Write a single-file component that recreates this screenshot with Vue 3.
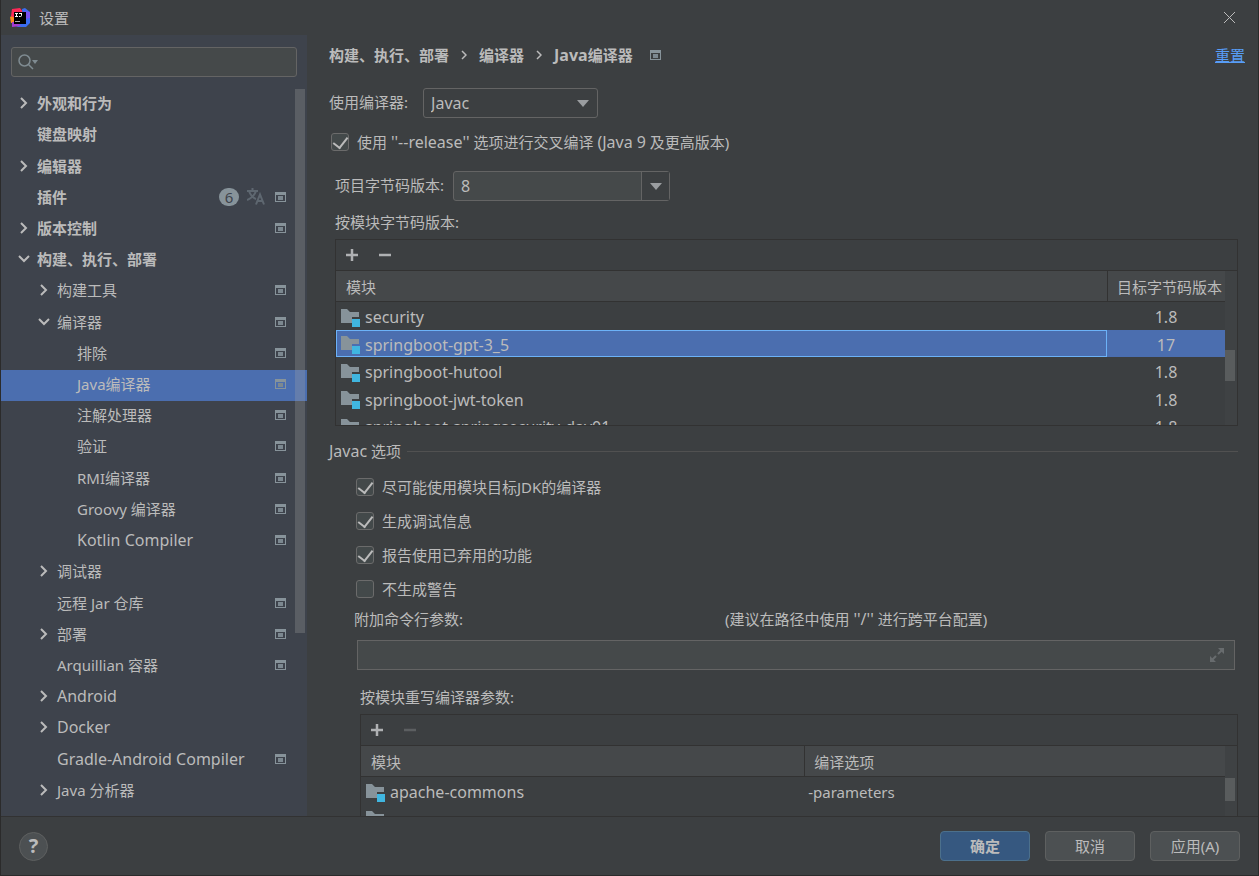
<script setup>
import { ref } from 'vue'

const tree = [
  { name: '外观和行为', level: 0, arrow: 'right' },
  { name: '键盘映射', level: 0 },
  { name: '编辑器', level: 0, arrow: 'right' },
  { name: '插件', level: 0, badge: 6, lang: true, project: true },
  { name: '版本控制', level: 0, arrow: 'right', project: true },
  { name: '构建、执行、部署', level: 0, arrow: 'down' },
  { name: '构建工具', level: 1, arrow: 'right', project: true },
  { name: '编译器', level: 1, arrow: 'down', project: true },
  { name: '排除', level: 2, project: true },
  { name: 'Java编译器', level: 2, project: true, selected: true },
  { name: '注解处理器', level: 2, project: true },
  { name: '验证', level: 2, project: true },
  { name: 'RMI编译器', level: 2, project: true },
  { name: 'Groovy 编译器', level: 2, project: true },
  { name: 'Kotlin Compiler', level: 2, project: true, latin: true },
  { name: '调试器', level: 1, arrow: 'right' },
  { name: '远程 Jar 仓库', level: 1, project: true },
  { name: '部署', level: 1, arrow: 'right', project: true },
  { name: 'Arquillian 容器', level: 1, project: true },
  { name: 'Android', level: 1, arrow: 'right', latin: true },
  { name: 'Docker', level: 1, arrow: 'right', latin: true },
  { name: 'Gradle-Android Compiler', level: 1, project: true, latin: true },
  { name: 'Java 分析器', level: 1, arrow: 'right' },
]

const modules = [
  { name: 'security', target: '1.8' },
  { name: 'springboot-gpt-3_5', target: '17', selected: true },
  { name: 'springboot-hutool', target: '1.8' },
  { name: 'springboot-jwt-token', target: '1.8' },
  { name: 'springboot-springsecurity-day01', target: '1.8' },
]

const overrides = [
  { name: 'apache-commons', options: '-parameters' },
  { name: 'common', options: '-parameters' },
]

const options = ref([
  { label: '尽可能使用模块目标JDK的编译器', on: true },
  { label: '生成调试信息', on: true },
  { label: '报告使用已弃用的功能', on: true },
  { label: '不生成警告', on: false },
])

const query = ref('')
const compiler = ref('Javac')
const useRelease = ref(true)
const bytecode = ref('8')
const extraArgs = ref('')
</script>

<template>
  <div class="window">
    <svg class="symbols" aria-hidden="true">
      <symbol id="project" viewBox="0 0 11 10">
        <path fill="#87939a" fill-rule="evenodd" d="M0 0h11v10H0zM1 3v6h9V3z" />
        <path fill="#7c8890" d="M3 4h5v4H3z" />
      </symbol>
      <symbol id="folder" viewBox="0 0 20 19">
        <path fill="#87939a" d="M1 1h6l3 3h9v5h-7v6H1z" />
        <path fill="#40b6e0" d="M12 11h8v8h-8z" />
      </symbol>
    </svg>

    <header class="titlebar">
      <svg class="logo" viewBox="0 0 20 20" aria-hidden="true">
        <path fill="#fc8a1d" d="M0 9l4-2v8H1z" />
        <path fill="#fe2857" d="M2 1l8-1 3 4-8 6-4-2z" />
        <path fill="#3a6df0" d="M12 1l3-1 5 4v11l-4 4H8l-4-2 9-4z" />
        <path fill="#7a4ff0" d="M14 3l6 1v6l-5 1z" />
        <path fill="#a63bd0" d="M2 14h5l4 4-9 1z" />
        <path fill="#000" d="M4 4h12v12H4z" />
        <path fill="none" stroke="#fff" d="M5 5.500h3M6.500 5v4M5 8.500h3M9 5.500h3M11.500 5v2.500q0 1-1 1H9" />
        <path fill="#aaa" d="M5 13h5v1H5z" />
      </svg>
      <h1>设置</h1>
      <button class="close" aria-label="关闭">
        <svg viewBox="0 0 13 13"><path d="M1 1l11 11M12 1L1 12" /></svg>
      </button>
    </header>

    <div class="body">
      <aside class="sidebar">
        <div class="search">
          <svg viewBox="0 0 20 16" aria-hidden="true">
            <circle cx="6.500" cy="6.500" r="5.500" />
            <path d="M10.500 10.500L15 15" />
            <path class="solid" d="M14 6h6l-3 4z" />
          </svg>
          <input v-model="query" type="search" aria-label="搜索设置" />
        </div>
        <nav class="tree">
          <a
            v-for="item in tree"
            :key="item.name"
            href="#"
            :class="['node', 'level-' + item.level, { selected: item.selected }]"
          >
            <span class="arrow">
              <svg v-if="item.arrow" :class="item.arrow" viewBox="0 0 12 12"><path d="M3 1l5 5-5 5" /></svg>
            </span>
            <span :class="['name', { latin: item.latin }]">{{ item.name }}</span>
            <span v-if="item.badge" class="badge">{{ item.badge }}</span>
            <svg v-if="item.lang" class="lang" viewBox="0 0 18 17" aria-hidden="true">
              <path d="M0 3h11M5.500 0v3M2 3q2 6 7 8M9 3Q7 9 0 12M9 16.500l4-10 4 10M10.500 13h5" />
            </svg>
            <svg v-if="item.project" class="project"><use href="#project" /></svg>
          </a>
          <span class="thumb"></span>
        </nav>
      </aside>

      <main class="main">
        <div class="crumbs">
          <b>构建、执行、部署</b>
          <svg class="sep" viewBox="0 0 6 10"><path d="M1 1l4 4-4 4" /></svg>
          <b>编译器</b>
          <svg class="sep" viewBox="0 0 6 10"><path d="M1 1l4 4-4 4" /></svg>
          <b><span class="latin">Java</span>编译器</b>
          <svg class="project"><use href="#project" /></svg>
          <a class="reset" href="#">重置</a>
        </div>

        <div class="line compiler">
          <label for="compiler">使用编译器:</label>
          <span class="combo">
            <select id="compiler" v-model="compiler" class="latin"><option>Javac</option></select>
            <svg viewBox="0 0 12 7"><path d="M0 0h12L6 7z" /></svg>
          </span>
        </div>

        <label class="check release">
          <input v-model="useRelease" type="checkbox" />
          <span>使用 <span class="latin">''--release''</span> 选项进行交叉编译 <span class="latin">(Java 9</span> 及更高版本)</span>
        </label>

        <div class="line bytecode">
          <label for="bytecode">项目字节码版本:</label>
          <span class="combo editable">
            <input id="bytecode" v-model="bytecode" class="latin" type="text" />
            <button aria-label="选择版本"><svg viewBox="0 0 12 7"><path d="M0 0h12L6 7z" /></svg></button>
          </span>
        </div>

        <p class="caption">按模块字节码版本:</p>
        <section class="panel modules">
          <div class="toolbar">
            <button aria-label="添加"><svg viewBox="0 0 14 14"><path d="M7 1v12M1 7h12" /></svg></button>
            <button aria-label="移除"><svg viewBox="0 0 14 14"><path d="M1 7h12" /></svg></button>
          </div>
          <div class="scroller">
            <table>
              <thead>
                <tr><th>模块</th><th class="target">目标字节码版本</th></tr>
              </thead>
              <tbody>
                <tr v-for="m in modules" :key="m.name" :class="{ selected: m.selected }">
                  <td><span class="module latin"><svg><use href="#folder" /></svg>{{ m.name }}</span></td>
                  <td class="target latin">{{ m.target }}</td>
                </tr>
              </tbody>
            </table>
            <div class="track"><span></span></div>
          </div>
        </section>

        <h2 class="group"><span><span class="latin">Javac</span> 选项</span></h2>
        <div class="options">
          <label v-for="o in options" :key="o.label" class="check">
            <input v-model="o.on" type="checkbox" />
            <span>{{ o.label }}</span>
          </label>
        </div>

        <div class="args-head">
          <label for="args">附加命令行参数:</label>
          <span>(建议在路径中使用 <span class="latin">''/''</span> 进行跨平台配置)</span>
        </div>
        <div class="args">
          <input id="args" v-model="extraArgs" type="text" />
          <button aria-label="展开">
            <svg viewBox="0 0 16 16">
              <path d="M9 1h6v6zM1 9l6 6H1z" />
              <path class="stroke" d="M9 7l4-4M7 9l-4 4" />
            </svg>
          </button>
        </div>

        <p class="caption override">按模块重写编译器参数:</p>
        <section class="panel overrides">
          <div class="toolbar">
            <button aria-label="添加"><svg viewBox="0 0 14 14"><path d="M7 1v12M1 7h12" /></svg></button>
            <button aria-label="移除" disabled><svg viewBox="0 0 14 14"><path d="M1 7h12" /></svg></button>
          </div>
          <div class="scroller">
            <table>
              <thead>
                <tr><th class="wide">模块</th><th>编译选项</th></tr>
              </thead>
              <tbody>
                <tr v-for="m in overrides" :key="m.name">
                  <td><span class="module latin"><svg><use href="#folder" /></svg>{{ m.name }}</span></td>
                  <td>{{ m.options }}</td>
                </tr>
              </tbody>
            </table>
            <div class="track"><span></span></div>
          </div>
        </section>
      </main>
    </div>

    <footer class="footer">
      <button class="help" aria-label="帮助">?</button>
      <button class="btn primary">确定</button>
      <button class="btn">取消</button>
      <button class="btn">应用(A)</button>
    </footer>
  </div>
</template>

<style>
body {
  background: #3c3f41;
}
</style>

<style scoped>
* {
  box-sizing: border-box;
}
.window {
  display: flex;
  flex-direction: column;
  height: 100vh;
  overflow: hidden;
  border: solid #2b2b2b;
  border-width: 0 1px 1px;
  background: #3c3f41;
  color: #bbb;
  font: 15px/20px "Noto Sans", "Noto Sans CJK SC", sans-serif;
}
svg {
  display: block;
  flex: none;
  fill: none;
}
.symbols {
  position: absolute;
  width: 0;
  height: 0;
}
button,
input,
select {
  padding: 0;
  border: 0;
  outline: 0;
  background: none;
  color: inherit;
  font: inherit;
}
a {
  color: inherit;
  text-decoration: none;
}
p,
h1,
h2 {
  margin: 0;
  font-size: 15px;
  font-weight: 400;
}
.latin {
  font-size: 16px;
}

.titlebar {
  display: flex;
  flex: none;
  align-items: center;
  height: 35px;
  padding: 0 22px 0 9px;
}
.logo {
  width: 20px;
  height: 20px;
  margin-right: 9px;
}
.close {
  margin-left: auto;
}
.close svg {
  width: 13px;
  height: 13px;
  stroke: #bbb;
}

.body {
  display: flex;
  flex: 1;
  min-height: 0;
}
.sidebar {
  display: flex;
  flex: none;
  flex-direction: column;
  width: 306px;
  padding: 12px 0 9px;
  background: #3e434c;
}
.search {
  display: flex;
  flex: none;
  align-items: center;
  height: 30px;
  margin: 0 10px 12px;
  padding: 0 6px;
  border: 1px solid #646464;
  border-radius: 3px;
  background: #45494a;
}
.search svg {
  width: 20px;
  height: 16px;
  stroke: #7f8b91;
  stroke-width: 1.5;
}
.search .solid {
  fill: #7f8b91;
  stroke: none;
}
.search input {
  flex: 1;
  min-width: 0;
}
.tree {
  position: relative;
  display: grid;
  flex: 1;
  grid-auto-rows: 1fr;
}
.node {
  display: flex;
  align-items: center;
  padding: 0 21px 3px 17px;
}
.node.level-0 {
  font-weight: 700;
}
.node.level-1 {
  padding-left: 37px;
}
.node.level-2 {
  padding-left: 57px;
}
.node.selected {
  background: #4b6eaf;
}
.arrow {
  width: 19px;
}
.arrow svg {
  width: 12px;
  height: 12px;
  stroke: #bbb;
  stroke-width: 2;
}
.arrow .down {
  transform: rotate(90deg);
}
.name {
  flex: 1;
}
.project {
  width: 11px;
  height: 10px;
}
.badge {
  width: 20px;
  height: 18px;
  border-radius: 9px;
  background: #87939a;
  color: #3e434c;
  font-weight: 400;
  line-height: 19px;
  text-align: center;
}
.lang {
  width: 18px;
  height: 17px;
  margin: 0 10px 0 8px;
  stroke: #5e6770;
  stroke-width: 2;
}
.thumb {
  position: absolute;
  top: 0;
  right: 2px;
  width: 10px;
  height: 544px;
  background: rgba(166, 166, 166, 0.28);
}

.main {
  display: flex;
  flex: 1;
  flex-direction: column;
  min-width: 0;
  padding: 10px 20px 0 22px;
  overflow: hidden;
}
.main > * {
  flex: none;
}
.crumbs {
  display: flex;
  align-items: center;
  height: 20px;
  margin-right: -7px;
}
.sep {
  width: 6px;
  height: 10px;
  margin: 0 12px;
  stroke: #bbb;
  stroke-width: 1.5;
}
.crumbs .project {
  margin-left: 17px;
}
.reset {
  margin-left: auto;
  color: #589df6;
  text-decoration: underline;
}
.line {
  display: flex;
  align-items: center;
  height: 30px;
}
.line label {
  padding-bottom: 2px;
}
.compiler {
  gap: 15px;
  margin-top: 23px;
}
.combo {
  display: flex;
  align-items: center;
  width: 175px;
  height: 30px;
  padding: 0 8px 0 7px;
  border: 1px solid #646464;
  border-radius: 3px;
}
.combo select {
  flex: 1;
  margin-right: -12px;
  padding-right: 12px;
  appearance: none;
}
.combo option {
  background: #3c3f41;
}
.combo svg {
  width: 12px;
  height: 7px;
  fill: #9a9da0;
  pointer-events: none;
}
.check {
  display: flex;
  align-items: center;
  gap: 8px;
  height: 20px;
}
.check input {
  display: grid;
  flex: none;
  width: 18px;
  height: 18px;
  margin: 0;
  border: 1px solid #6b6b6b;
  border-radius: 3px;
  appearance: none;
  background: #43494a;
  place-items: center;
}
.check input:checked::before {
  width: 7px;
  height: 12px;
  margin: 0 0 4px;
  border: solid #bbb;
  border-width: 0 2px 2px 0;
  content: "";
  transform: rotate(38deg);
}
.release {
  margin: 14px 0 0 2px;
}
.bytecode {
  gap: 9px;
  margin: 19px 0 0 6px;
}
.editable {
  width: 217px;
  padding: 0;
  background: #45494a;
}
.editable input {
  flex: 1;
  min-width: 0;
  padding: 0 7px;
}
.editable button {
  display: grid;
  width: 28px;
  height: 28px;
  border-left: 1px solid #646464;
  background: #3c3f41;
  place-items: center;
}
.caption {
  margin: 11px 0 0 6px;
}
.panel {
  display: flex;
  flex-direction: column;
  margin: 7px 0 0 6px;
  border: 1px solid #323232;
}
.panel.modules {
  height: 187px;
}
.toolbar {
  display: flex;
  flex: none;
  gap: 19px;
  align-items: center;
  height: 31px;
  padding-left: 9px;
  border-bottom: 1px solid #323232;
}
.toolbar svg {
  width: 14px;
  height: 14px;
  stroke: #afb1b3;
  stroke-width: 2.5;
}
.toolbar button:disabled svg {
  stroke: #5c5f61;
}
.scroller {
  display: flex;
  flex: 1;
  min-height: 0;
  overflow: hidden;
}
table {
  flex: 1;
  align-self: flex-start;
  width: 100%;
  border-collapse: separate;
  border-spacing: 0;
  table-layout: fixed;
}
th {
  height: 31px;
  padding: 1px 0 0 10px;
  border-bottom: 1px solid #323232;
  background: #45484a;
  font-weight: 400;
  text-align: left;
}
th + th {
  padding-left: 9px;
  border-left: 1px solid #323232;
}
.target {
  width: 118px;
  white-space: nowrap;
}
td {
  height: 27px;
  padding: 2px 4px 0;
}
td.target {
  padding-right: 0;
  padding-left: 0;
  text-align: center;
}
.wide {
  width: 51.3%;
}
tr:nth-child(odd) td {
  height: 28px;
}
.module {
  display: flex;
  align-items: center;
  gap: 5px;
}
.module svg {
  width: 20px;
  height: 19px;
}
tr.selected td {
  background: #4b6eaf;
}
tr.selected td:first-child {
  outline: 1px solid #6cb2f8;
  outline-offset: -1px;
}
.track {
  flex: none;
  width: 12px;
  background: #3f4244;
}
.track span {
  display: block;
  width: 10px;
  height: 31px;
  margin-top: 79px;
  background: #595c5d;
}
.group {
  display: flex;
  gap: 6px;
  align-items: center;
  height: 20px;
  margin-top: 15px;
}
.group::after {
  flex: 1;
  height: 1px;
  background: #515151;
  content: "";
}
.options {
  display: grid;
  gap: 14px;
  margin: 16px 0 0 27px;
}
.args-head {
  display: grid;
  grid-template-columns: 371px 1fr;
  height: 20px;
  margin: 10px 0 0 25px;
}
.args {
  display: flex;
  align-items: center;
  height: 30px;
  margin: 11px 3px 0 28px;
  padding: 0 9px;
  border: 1px solid #646464;
  background: #45494a;
}
.args input {
  flex: 1;
}
.args svg {
  width: 16px;
  height: 16px;
  fill: #686c6e;
}
.args .stroke {
  stroke: #686c6e;
  stroke-width: 2;
}
.override {
  margin: 17px 0 0 31px;
}
.panel.overrides {
  margin: 7px 0 0 31px;
}
.overrides .track span {
  height: 23px;
  margin-top: 32px;
}

.footer {
  display: flex;
  flex: none;
  gap: 15px;
  align-items: center;
  height: 59px;
  padding: 0 18px;
  border-top: 1px solid #323232;
}
.help {
  width: 29px;
  height: 29px;
  margin-right: auto;
  border: 1px solid #5e6060;
  border-radius: 50%;
  background: #4c5052;
  font-size: 20px;
  font-weight: 700;
}
.btn {
  width: 90px;
  height: 30px;
  border: 1px solid #5e6060;
  border-radius: 4px;
  background: #4c5052;
}
.primary {
  border-color: #4c708c;
  background: #365880;
  font-weight: 700;
}
</style>
